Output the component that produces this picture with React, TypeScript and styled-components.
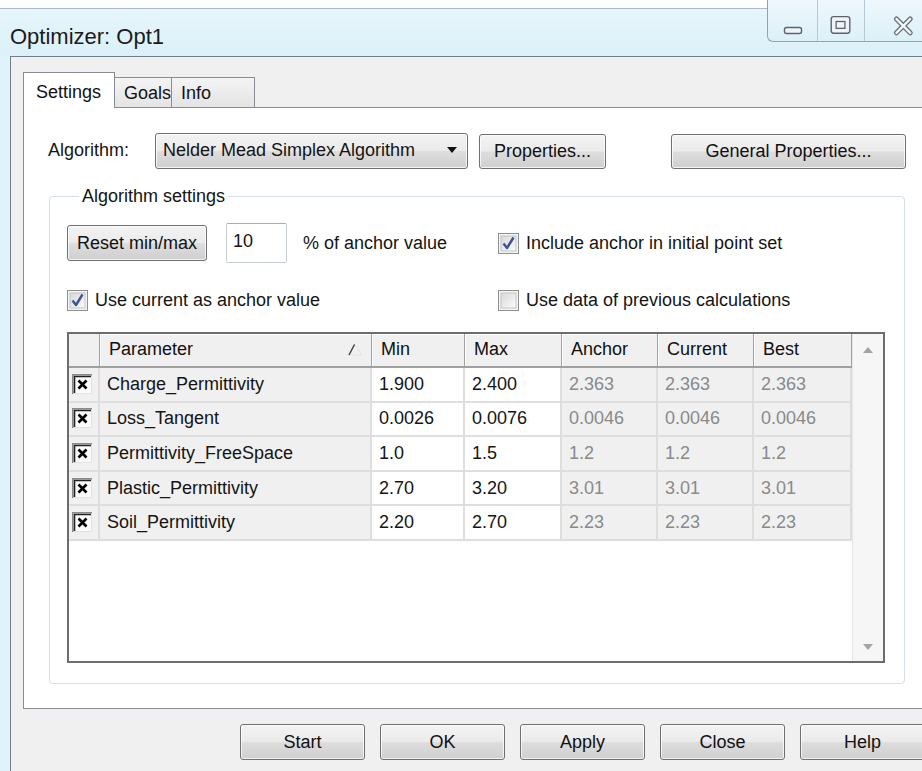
import React from "react";
import styled, { createGlobalStyle } from "styled-components";

const GlobalStyle = createGlobalStyle`
  html, body { margin: 0; padding: 0; background: #ffffff; }
  body {
    font-family: "Liberation Sans", Arial, sans-serif;
    font-size: 18px;
    color: #141414;
  }
  * { box-sizing: border-box; }
`;

/* ---------- window frame ---------- */

const Window = styled.div`
  width: 922px;
  height: 771px;
  overflow: hidden;
  display: flex;
  flex-direction: column;
  background: #e1f3fa;
`;

const TitleBar = styled.div`
  height: 56px;
  flex: none;
  display: flex;
  align-items: flex-start;
  background: linear-gradient(
    to bottom,
    #fdfefe 0,
    #fdfefe 8px,
    #a9bccb 8px,
    #a9bccb 9px,
    #e6f6fc 9px,
    #dbf0f8 100%
  );
`;

const Caption = styled.div`
  flex: 1;
  padding: 26px 0 0 10px;
  font-size: 22px;
  line-height: 22px;
  color: #1b1b1b;
`;

const CaptionButtons = styled.div`
  display: flex;
  height: 42px;
  background: linear-gradient(to bottom, #eef8fc, #dcf0f8);
  border-left: 1px solid #8ea3b6;
  border-bottom: 1px solid #8ea3b6;
  border-bottom-left-radius: 6px;
`;

const CaptionButton = styled.div<{ $width: number; $first?: boolean }>`
  width: ${(p) => p.$width}px;
  height: 100%;
  border-left: ${(p) => (p.$first ? "none" : "1px solid #b7c8d5")};
  display: flex;
`;

/* ---------- client area and tabs ---------- */

const Client = styled.div`
  flex: 1;
  margin-left: 10px;
  border-left: 1px solid #707e8b;
  border-top: 1px solid #707e8b;
  background: #f0f0f0;
  display: flex;
  flex-direction: column;
  padding: 15px 0 0 12px;
`;

const TabStrip = styled.div`
  display: flex;
  align-items: flex-end;
  height: 36px;
  margin-bottom: -1px;
  position: relative;
  z-index: 1;
`;

const Tab = styled.div<{ $active?: boolean; $width: number }>`
  width: ${(p) => p.$width}px;
  height: ${(p) => (p.$active ? 36 : 31)}px;
  border: 1px solid #898c95;
  border-bottom: ${(p) => (p.$active ? "none" : "1px solid #898c95")};
  border-left: ${(p) => (p.$active ? "1px solid #898c95" : "none")};
  background: ${(p) =>
    p.$active ? "#ffffff" : "linear-gradient(to bottom, #f4f4f4, #e4e4e4)"};
  padding: ${(p) => (p.$active ? "8px 0 0 12px" : "4px 0 0 9px")};
  line-height: 22px;
  color: #111;
`;

const TabPage = styled.div`
  height: 602px;
  margin-right: -20px;
  border: 1px solid #898c95;
  background: #ffffff;
  padding: 25px 0 0 24px;
`;

/* ---------- controls ---------- */

const TopRow = styled.div`
  display: flex;
  align-items: center;
  height: 36px;
`;

const FieldLabel = styled.span`
  width: 107px;
  line-height: 22px;
  padding-bottom: 2px;
`;

const PushButton = styled.button<{ $width: number; $height?: number; $gap?: number }>`
  width: ${(p) => p.$width}px;
  height: ${(p) => p.$height ?? 36}px;
  margin: 0 0 0 ${(p) => p.$gap ?? 0}px;
  flex: none;
  font-family: inherit;
  font-size: 18px;
  color: #111;
  border: 1px solid #707070;
  border-radius: 3px;
  background: linear-gradient(
    to bottom,
    #f3f3f3 0%,
    #ebebeb 48%,
    #dddddd 52%,
    #cfcfcf 100%
  );
  box-shadow: inset 0 0 0 1px rgba(255, 255, 255, 0.75);
  padding: 0;
`;

const Combo = styled.div`
  width: 313px;
  height: 36px;
  flex: none;
  display: flex;
  align-items: center;
  justify-content: space-between;
  padding: 0 10px 2px 7px;
  border: 1px solid #707070;
  border-radius: 3px;
  background: linear-gradient(
    to bottom,
    #f3f3f3 0%,
    #ebebeb 48%,
    #dddddd 52%,
    #cfcfcf 100%
  );
  box-shadow: inset 0 0 0 1px rgba(255, 255, 255, 0.75);
`;

const GroupBox = styled.fieldset`
  margin: 17px 0 0 1px;
  width: 856px;
  border: 1px solid #d5dfe5;
  border-radius: 4px;
  padding: 17px 0 20px 17px;
`;

const GroupLegend = styled.legend`
  margin-left: 12px;
  padding: 0 3px;
  line-height: 20px;
  font-size: 18px;
`;

const OptionGrid = styled.div`
  display: grid;
  grid-template-columns: 431px 1fr;
  grid-template-rows: 40px 22px;
  row-gap: 26px;
  align-items: center;
`;

const OptionCell = styled.div`
  display: flex;
  align-items: center;
`;

const NumberBox = styled.div`
  width: 61px;
  height: 40px;
  margin-left: 19px;
  border: 1px solid #c6cdd5;
  border-top-color: #abadb3;
  border-radius: 2px;
  background: #fff;
  padding: 6px 0 0 6px;
  line-height: 22px;
`;

const PlainText = styled.span<{ $gap?: number }>`
  margin-left: ${(p) => p.$gap ?? 0}px;
  line-height: 22px;
`;

const CheckRow = styled.label`
  display: flex;
  align-items: center;
  gap: 7px;
  line-height: 22px;
`;

/* ---------- parameter table ---------- */

const TableFrame = styled.div`
  margin-top: 21px;
  width: 818px;
  height: 331px;
  border: 2px solid #6d6d6d;
  background: #ffffff;
  display: flex;
`;

const Grid = styled.div`
  width: 783px;
  display: grid;
  grid-template-columns: 31px 272px 93px 97px 96px 96px 98px;
  grid-template-rows: 34px repeat(5, 34.6px);
  align-content: start;
`;

const HeaderCell = styled.div<{ $blank?: boolean }>`
  background: #f0f0f0;
  border-bottom: 2px solid #a0a0a0;
  border-right: 1px solid #a0a0a0;
  box-shadow: ${(p) => (p.$blank ? "none" : "inset 1px 1px 0 #ffffff")};
  display: flex;
  align-items: center;
  justify-content: space-between;
  padding: 0 8px 2px 9px;
  line-height: 22px;
  color: #111;
`;

type Tone = "flag" | "key" | "edit" | "readonly";

const toneBg: Record<Tone, string> = {
  flag: "#f0f0f0",
  key: "#f0f0f0",
  edit: "#ffffff",
  readonly: "#f0f0f0",
};

const BodyCell = styled.div<{ $tone: Tone }>`
  background: ${(p) => toneBg[p.$tone]};
  color: ${(p) => (p.$tone === "readonly" ? "#8a8a8a" : "#141414")};
  border-right: 2px solid #dedede;
  border-bottom: 2px solid #dedede;
  display: flex;
  align-items: center;
  padding: 0 0 1px ${(p) => (p.$tone === "flag" ? 3 : 7)}px;
  line-height: 22px;
  white-space: nowrap;
`;

const ScrollTrack = styled.div`
  flex: 1;
  background: #f6f6f6;
  border-left: 1px solid #e6e6e6;
  display: flex;
  flex-direction: column;
  justify-content: space-between;
  align-items: center;
  padding: 13px 0 11px;
`;

/* ---------- dialog buttons ---------- */

const Footer = styled.div`
  display: flex;
  gap: 15px;
  padding: 15px 0 0 217px;
`;

/* ---------- drawn glyphs ---------- */

const MinimizeGlyph = () => (
  <svg width="49" height="42" viewBox="0 0 49 42">
    <rect x="16.5" y="27.5" width="17" height="6" rx="2" fill="#f2f5f8" stroke="#5a6470" strokeWidth="1.4" />
  </svg>
);

const MaximizeGlyph = () => (
  <svg width="47" height="42" viewBox="0 0 47 42">
    <rect x="13.5" y="16.5" width="19" height="17" rx="2.5" fill="#f0f4f7" stroke="#5a6470" strokeWidth="1.4" />
    <rect x="18.5" y="21.5" width="9" height="7" fill="none" stroke="#5a6470" strokeWidth="1.3" />
  </svg>
);

const CloseGlyph = () => (
  <svg width="58" height="42" viewBox="0 0 58 42">
    <path d="M32 19 L46 33 M46 19 L32 33" stroke="#6a737c" strokeWidth="5.2" strokeLinecap="round" />
    <path d="M32 19 L46 33 M46 19 L32 33" stroke="#f7f9fb" strokeWidth="2.4" strokeLinecap="round" />
  </svg>
);

const DropArrow = () => (
  <svg width="10" height="6" viewBox="0 0 10 6">
    <path d="M0 0 H10 L5 6 Z" fill="#111" />
  </svg>
);

const SortMark = () => (
  <svg width="16" height="13" viewBox="0 0 16 13">
    <path d="M8 1.5 L14.5 12 H2" fill="none" stroke="#e2e2e2" strokeWidth="1" />
    <path d="M2 12 L7.5 1.5" stroke="#3a3a3a" strokeWidth="1.4" />
  </svg>
);

const ScrollArrow = ({ down }: { down?: boolean }) => (
  <svg width="10" height="6" viewBox="0 0 10 6">
    <path d={down ? "M0 0 H10 L5 6 Z" : "M0 6 H10 L5 0 Z"} fill="#a4a4a4" />
  </svg>
);

const CheckBox = ({ checked }: { checked: boolean }) => (
  <svg width="21" height="21" viewBox="0 0 21 21">
    <defs>
      <linearGradient id={checked ? "cbOn" : "cbOff"} x1="0" y1="0" x2="1" y2="1">
        <stop offset="0" stopColor="#d8d8d8" />
        <stop offset="1" stopColor="#fbfbfb" />
      </linearGradient>
    </defs>
    <rect x="0.5" y="0.5" width="20" height="20" fill="#f4f4f4" stroke="#8e8f8f" />
    <rect x="3" y="3" width="15" height="15" fill={`url(#${checked ? "cbOn" : "cbOff"})`} stroke="#c2c4c7" />
    {checked && (
      <path d="M5.5 10.5 L9 15 L15.5 4.5" fill="none" stroke="#3b5596" strokeWidth="2.4" strokeLinejoin="round" />
    )}
  </svg>
);

const FlagBox = () => (
  <svg width="20" height="20" viewBox="0 0 20 20">
    <rect x="0" y="0" width="20" height="20" fill="#fbfbfb" />
    <path d="M19.5 0 V19.5 H0" fill="none" stroke="#e2e2e2" strokeWidth="1" />
    <path d="M0.75 20 V0.75 H20" fill="none" stroke="#8a8a8a" strokeWidth="1.5" />
    <path d="M2.5 19 V2.5 H19" fill="none" stroke="#222" strokeWidth="1.6" />
    <path d="M6.5 6.5 L14.5 14.5 M14.5 6.5 L6.5 14.5" stroke="#000" strokeWidth="2.6" />
  </svg>
);

/* ---------- data ---------- */

const columns = ["Parameter", "Min", "Max", "Anchor", "Current", "Best"];

const parameters: [string, string, string, string, string, string][] = [
  ["Charge_Permittivity", "1.900", "2.400", "2.363", "2.363", "2.363"],
  ["Loss_Tangent", "0.0026", "0.0076", "0.0046", "0.0046", "0.0046"],
  ["Permittivity_FreeSpace", "1.0", "1.5", "1.2", "1.2", "1.2"],
  ["Plastic_Permittivity", "2.70", "3.20", "3.01", "3.01", "3.01"],
  ["Soil_Permittivity", "2.20", "2.70", "2.23", "2.23", "2.23"],
];

const toneFor = (i: number): Tone => (i === 0 ? "key" : i <= 2 ? "edit" : "readonly");

export default function App() {
  return (
    <>
      <GlobalStyle />
      <Window>
        <TitleBar>
          <Caption>Optimizer: Opt1</Caption>
          <CaptionButtons>
            <CaptionButton $width={49} $first>
              <MinimizeGlyph />
            </CaptionButton>
            <CaptionButton $width={47}>
              <MaximizeGlyph />
            </CaptionButton>
            <CaptionButton $width={58}>
              <CloseGlyph />
            </CaptionButton>
          </CaptionButtons>
        </TitleBar>

        <Client>
          <TabStrip>
            <Tab $active $width={92}>Settings</Tab>
            <Tab $width={57}>Goals</Tab>
            <Tab $width={83}>Info</Tab>
          </TabStrip>

          <TabPage>
            <TopRow>
              <FieldLabel>Algorithm:</FieldLabel>
              <Combo>
                <span>Nelder Mead Simplex Algorithm</span>
                <DropArrow />
              </Combo>
              <PushButton $width={127} $height={35} $gap={11}>
                Properties...
              </PushButton>
              <PushButton $width={235} $height={35} $gap={65}>
                General Properties...
              </PushButton>
            </TopRow>

            <GroupBox>
              <GroupLegend>Algorithm settings</GroupLegend>
              <OptionGrid>
                <OptionCell>
                  <PushButton $width={140}>Reset min/max</PushButton>
                  <NumberBox>10</NumberBox>
                  <PlainText $gap={16}>% of anchor value</PlainText>
                </OptionCell>
                <OptionCell>
                  <CheckRow>
                    <CheckBox checked />
                    Include anchor in initial point set
                  </CheckRow>
                </OptionCell>
                <OptionCell>
                  <CheckRow>
                    <CheckBox checked />
                    Use current as anchor value
                  </CheckRow>
                </OptionCell>
                <OptionCell>
                  <CheckRow>
                    <CheckBox checked={false} />
                    Use data of previous calculations
                  </CheckRow>
                </OptionCell>
              </OptionGrid>

              <TableFrame>
                <Grid>
                  <HeaderCell $blank />
                  {columns.map((c) => (
                    <HeaderCell key={c}>
                      <span>{c}</span>
                      {c === "Parameter" && <SortMark />}
                    </HeaderCell>
                  ))}
                  {parameters.map((row) => (
                    <React.Fragment key={row[0]}>
                      <BodyCell $tone="flag">
                        <FlagBox />
                      </BodyCell>
                      {row.map((v, i) => (
                        <BodyCell key={i} $tone={toneFor(i)}>
                          {v}
                        </BodyCell>
                      ))}
                    </React.Fragment>
                  ))}
                </Grid>
                <ScrollTrack>
                  <ScrollArrow />
                  <ScrollArrow down />
                </ScrollTrack>
              </TableFrame>
            </GroupBox>
          </TabPage>

          <Footer>
            <PushButton $width={125}>Start</PushButton>
            <PushButton $width={125}>OK</PushButton>
            <PushButton $width={125}>Apply</PushButton>
            <PushButton $width={125}>Close</PushButton>
            <PushButton $width={125}>Help</PushButton>
          </Footer>
        </Client>
      </Window>
    </>
  );
}
